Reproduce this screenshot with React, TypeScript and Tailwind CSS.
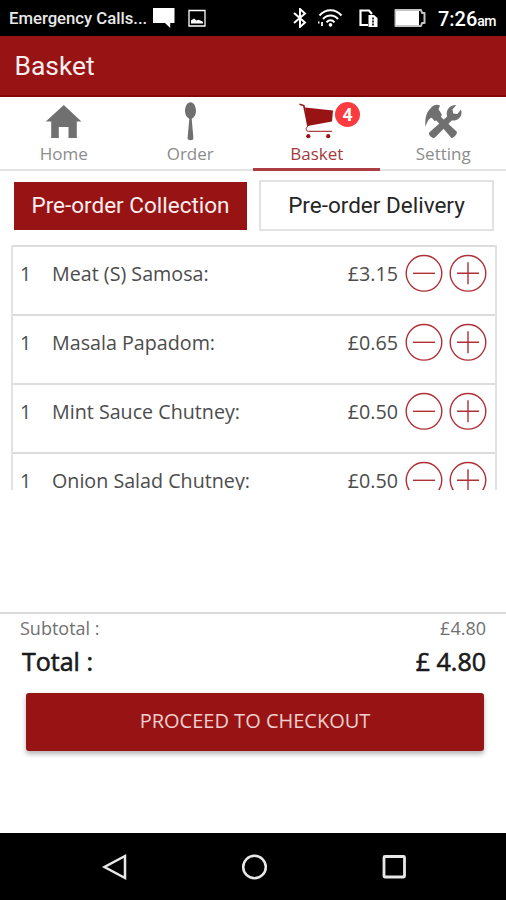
import type { ReactNode } from "react";
import clsx from "clsx";

interface BasketItem {
  qty: number;
  name: string;
  price: string;
}

interface TabProps {
  label: string;
  icon: ReactNode;
  active?: boolean;
  badge?: number;
}

const ITEMS: BasketItem[] = [
  { qty: 1, name: "Meat (S) Samosa:", price: "£3.15" },
  { qty: 1, name: "Masala Papadom:", price: "£0.65" },
  { qty: 1, name: "Mint Sauce Chutney:", price: "£0.50" },
  { qty: 1, name: "Onion Salad Chutney:", price: "£0.50" },
];

function HomeIcon() {
  return (
    <svg viewBox="0 0 40 40" className="size-10" fill="currentColor">
      <path d="M2.8 20.6 20.8 4l17.6 16.6h-4.6V37h-8.3V26h-9.7v11H8.2V20.6z" />
    </svg>
  );
}

function SpoonIcon() {
  return (
    <svg viewBox="0 0 40 40" className="size-10" fill="currentColor">
      <path d="M20.5 1.2c3.2 0 5.5 4 5.5 8.8 0 3.8-1.7 6.4-4.3 7.8l1.7 19.2c.2 3-6 3-5.8 0l1.7-19.2C16.7 16.4 15 13.8 15 10c0-4.8 2.3-8.8 5.5-8.8z" />
    </svg>
  );
}

function CartIcon() {
  return (
    <svg viewBox="0 0 40 40" className="size-10" fill="none" stroke="currentColor">
      <path d="M9 6.6 37 9.6 36 20.5 11.5 25z" fill="currentColor" stroke="none" />
      <path d="M3.5 3.3 7.8 4.6 12 25" strokeWidth="1.6" />
      <path d="M12 25c-2.5 2-2.5 5 .5 5.3H36" strokeWidth="1" />
      <circle cx="12.3" cy="35.2" r="2.1" fill="currentColor" stroke="none" />
      <circle cx="32.2" cy="35.2" r="2.1" fill="currentColor" stroke="none" />
    </svg>
  );
}

function ToolsIcon() {
  return (
    <svg viewBox="0 0 40 40" className="size-10" fill="currentColor">
      <path d="M2.5 25.5C1.6 17 4 10 7.5 7.5 9.5 4.500 13.500 2.600 17 4.600l-1.500 3.600 3.300 5.200-.8 2.600 15.600 14.600c1.600 1.800-3.500 7.600-5.400 6.100L13.500 19.600l-2 .3-2.700-3.200c-3 .4-4.800 4.500-6.300 8.800z" />
      <path d="M6.2 31.600 24.200 15.500c-2-6.500 2.800-12 9.100-11.500l-3.900 4.500.9 3.900 4 .6 3.700-4.600c2.100 6-2.300 11.600-9.300 11L12 36.600c-2.200 1.800-7.200-2.900-5.800-5z" />
    </svg>
  );
}

function StatusBar() {
  return (
    <div className="flex h-9 items-center bg-black pt-0.5 pr-2.5 pl-[9px] font-[Roboto] font-medium text-white">
      <span className="w-36 text-[16.7px] whitespace-nowrap text-[#e8e8e8]">
        Emergency Calls...
      </span>
      <svg viewBox="0 0 22 20" className="-mt-0.5 h-5 w-[22px]" fill="currentColor">
        <path d="M0 0h21.5v15h-4.3v5L12 15H0z" />
      </svg>
      <svg viewBox="0 0 18 18" className="-mt-0.5 ml-[13px] size-[18px]" fill="none" stroke="currentColor">
        <path d="M1 1.500h16v15.500H1z" strokeWidth="1.3" />
        <path d="M3 14.500V11.500L6 9.500l2.500 2 2-.8 4.500 2v1.800z" fill="currentColor" stroke="none" />
      </svg>
      <svg viewBox="0 0 14 20" className="-mt-0.5 ml-[87px] h-5 w-3.5" fill="none" stroke="currentColor" strokeWidth="2">
        <path d="m1 5 11 9.500-5 4.500V1l5 4.500L1 15" />
      </svg>
      <svg viewBox="0 0 26 20" className="-mt-0.5 ml-2.5 h-5 w-[26px]" fill="none" stroke="currentColor">
        <path d="M2.500 7.500c6-7 16-7 22 0M6 11c4-4.800 11-4.800 15 0M9.500 14.300c2.300-2.700 5.700-2.700 8 0" strokeWidth="2" />
        <circle cx="13.5" cy="16.9" r="1.800" fill="currentColor" stroke="none" />
        <path d="M1 14.500h1.500M5 14v4" strokeWidth="1.8" />
      </svg>
      <svg viewBox="0 0 19 18" className="-mt-0.5 ml-4 h-[18px] w-[19px]" fill="none" stroke="currentColor">
        <path d="M9 16H1.500V1.500H10L13 5" strokeWidth="2.2" />
        <path d="M9.500 6H15l3.500 3v9h-9z" fill="currentColor" stroke="none" />
        <path d="M14 8.500v2M14 11.500v2M14 14.500v2" stroke="#000" strokeWidth="1.6" />
      </svg>
      <svg viewBox="0 0 32 18" className="-mt-0.5 ml-4 h-[18px] w-8" fill="none" stroke="#c4c4c4">
        <path d="M1.500 1h25.500l1 3h2.500v10H28l-1 3H1.500z" strokeWidth="2" strokeLinejoin="round" />
        <path d="M2 2h23v14H2z" fill="#fff" stroke="none" />
      </svg>
      <span className="ml-auto text-[20px] whitespace-nowrap">
        7:26<span className="text-[14px] tracking-[-0.5px]">am</span>
      </span>
    </div>
  );
}

function Tab({ label, icon, active, badge }: TabProps) {
  return (
    <div
      className={clsx(
        "relative flex flex-1 flex-col items-center pt-1",
        active
          ? "border-b-3 border-[#ab3d43] text-[#981414]"
          : "border-b-2 border-[#e3e3e5] text-[#707070]",
      )}
    >
      {icon}
      <span
        className={clsx(
          "pl-px text-[17px] leading-[25px]",
          active ? "text-[#a33a3d]" : "text-[#8c8c8c]",
        )}
      >
        {label}
      </span>
      {badge ? (
        <span className="absolute top-[5px] left-[82px] flex size-[25px] items-center justify-center rounded-full bg-[#fa3c40] text-[17px] font-bold text-white">
          {badge}
        </span>
      ) : null}
    </div>
  );
}

function RoundButton({ plus }: { plus?: boolean }) {
  return (
    <svg viewBox="0 0 38 38" className="size-[38px]" fill="none" stroke="#b03036">
      <circle cx="19" cy="19.3" r="17.8" strokeWidth="1.4" />
      <path d={plus ? "M8 19.300h22M19 8.300v22" : "M8 19.300h22"} strokeWidth="1.4" />
    </svg>
  );
}

function BasketRow({ item }: { item: BasketItem }) {
  return (
    <div className="flex h-[69px] items-start border-t-2 border-[#dcdcdc] pt-[7px] pr-2 pl-[7px] text-[19.7px] leading-[39px] text-[#4c4c4c]">
      <span className="w-8">{item.qty}</span>
      <span className="flex-1 whitespace-nowrap">{item.name}</span>
      <span className="mr-[7px]">{item.price}</span>
      <RoundButton />
      <span className="w-1.5" />
      <RoundButton plus />
    </div>
  );
}

function NavigationBar() {
  return (
    <div className="mt-auto flex h-[67px] items-center justify-center gap-[113px] bg-black pl-0.5 text-[#e8e8e8]">
      <svg viewBox="0 0 28 28" className="size-7" fill="none" stroke="currentColor" strokeWidth="2.5">
        <path d="M26 3v22L5.500 14z" />
      </svg>
      <svg viewBox="0 0 28 28" className="size-7" fill="none" stroke="currentColor" strokeWidth="2.5">
        <circle cx="14.5" cy="14" r="11.3" />
      </svg>
      <svg viewBox="0 0 28 28" className="size-7" fill="none" stroke="currentColor" strokeWidth="2.8">
        <rect x="3" y="3.500" width="20.5" height="20.5" rx="1" />
      </svg>
    </div>
  );
}

export default function App() {
  return (
    <div className="flex h-[900px] w-[506px] flex-col overflow-hidden bg-white font-['Open_Sans',sans-serif]">
      <StatusBar />
      <header className="flex h-[61px] items-center border-b-2 border-[#870408] bg-[#981414] pt-0.5 pl-[14.5px] font-[Roboto] text-[26.4px] text-[#fbeeee]">
        Basket
      </header>

      <nav className="flex h-[74px] bg-[#fefffe]">
        <Tab label="Home" icon={<HomeIcon />} />
        <Tab label="Order" icon={<SpoonIcon />} />
        <Tab label="Basket" icon={<CartIcon />} active badge={4} />
        <Tab label="Setting" icon={<ToolsIcon />} />
      </nav>

      <div className="flex h-[60px] items-end gap-3 pr-3 pl-3.5 font-[Roboto] text-[22.5px]">
        <button type="button" className="mb-px h-12 w-[233px] bg-[#981414] text-[#fbeeee]">
          Pre-order Collection
        </button>
        <button type="button" className="h-[51px] w-[235px] border-2 border-[#e2e2e2] text-[#262626]">
          Pre-order Delivery
        </button>
      </div>

      <div className="mt-3.5 mr-[9px] ml-[11px] h-[245px] overflow-hidden border-x-2 border-[#e2e2e2]">
        {ITEMS.map((item) => (
          <BasketRow key={item.name} item={item} />
        ))}
      </div>

      <section className="mt-[122px] border-t-2 border-[#dadada] px-5">
        <div className="flex justify-between pt-[3px] text-[18px] leading-[23px] text-[#717171]">
          <span>Subtotal :</span>
          <span>£4.80</span>
        </div>
        <div className="flex justify-between pt-[3px] pl-0.5 text-[25px] leading-9 text-[#1a1a1a] [-webkit-text-stroke:0.6px_#1a1a1a]">
          <span>Total :</span>
          <span>£ 4.80</span>
        </div>
      </section>

      <button
        type="button"
        className="mt-3.5 ml-[26px] h-[58px] w-[458px] rounded-[3px] bg-[#981414] pb-[3px] text-[20px] text-[#efcfcf] shadow-[0_3px_5px_rgba(0,0,0,0.3)]"
      >
        PROCEED TO CHECKOUT
      </button>

      <NavigationBar />
    </div>
  );
}
